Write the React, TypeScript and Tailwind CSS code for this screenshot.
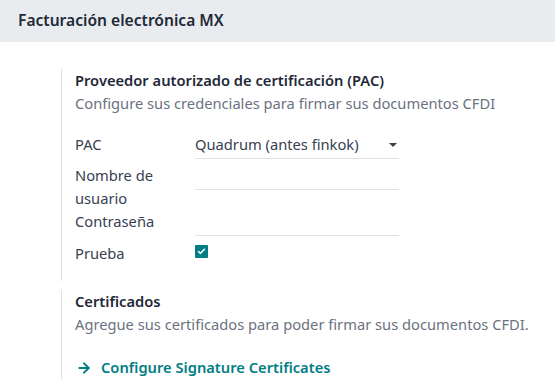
import { ArrowRight, Check } from "lucide-react";

const font = { fontFamily: '"Noto Sans", "Open Sans", sans-serif' };

function Field({ value, caret }: { value?: string; caret?: boolean }) {
  return (
    <div className="flex h-[26px] w-[204px] items-start justify-between border-b border-[#dee2e6]">
      <span className="leading-[23px]">{value}</span>
      {caret && (
        <span className="mt-[10px] mr-[2px] h-0 w-0 border-x-[4px] border-t-[4px] border-x-transparent border-t-[#374151]" />
      )}
    </div>
  );
}

export default function App() {
  return (
    <div className="h-[390px] w-[555px] overflow-hidden bg-white text-[14.7px] text-[#374151]" style={font}>
      <div className="flex h-[42px] items-center bg-[#e9ecef] pl-[18px]">
        <h2 className="text-[15.6px] font-semibold text-[#1f2937]">Facturación electrónica MX</h2>
      </div>

      <div className="pl-[61px] leading-[23px]">
        <section className="mt-[27px] border-l border-[#dee2e6] pb-[16px] pl-[13px]">
          <p className="font-semibold text-[#1f2937]">Proveedor autorizado de certificación (PAC)</p>
          <p className="text-[#6b7280]">Configure sus credenciales para firmar sus documentos CFDI</p>

          <div className="mt-[18px]">
            <div className="flex h-[31px]">
              <span className="w-[120px]">PAC</span>
              <Field value="Quadrum (antes finkok)" caret />
            </div>
            <div className="flex h-[46px]">
              <span className="w-[120px]">
                Nombre de
                <br />
                usuario
              </span>
              <Field />
            </div>
            <div className="flex h-[32px]">
              <span className="w-[120px]">Contraseña</span>
              <Field />
            </div>
            <div className="flex h-[23px]">
              <span className="w-[120px]">Prueba</span>
              <span className="mt-[3px] flex h-[13px] w-[13px] items-center justify-center rounded-[1px] bg-[#017e84]">
                <Check className="h-[9px] w-[9px] text-white" strokeWidth={4} />
              </span>
            </div>
          </div>
        </section>

        <section className="mt-[9px] h-[89px] border-l border-[#dee2e6] pl-[13px]">
          <p className="font-semibold text-[#1f2937]">Certificados</p>
          <p className="text-[#6b7280]">Agregue sus certificados para poder firmar sus documentos CFDI.</p>
          <a className="mt-[20px] flex items-center gap-[9px] pl-[1px] font-semibold text-[#017e84]" href="#">
            <ArrowRight className="h-[16px] w-[16px]" strokeWidth={3} />
            Configure Signature Certificates
          </a>
        </section>
      </div>
    </div>
  );
}
